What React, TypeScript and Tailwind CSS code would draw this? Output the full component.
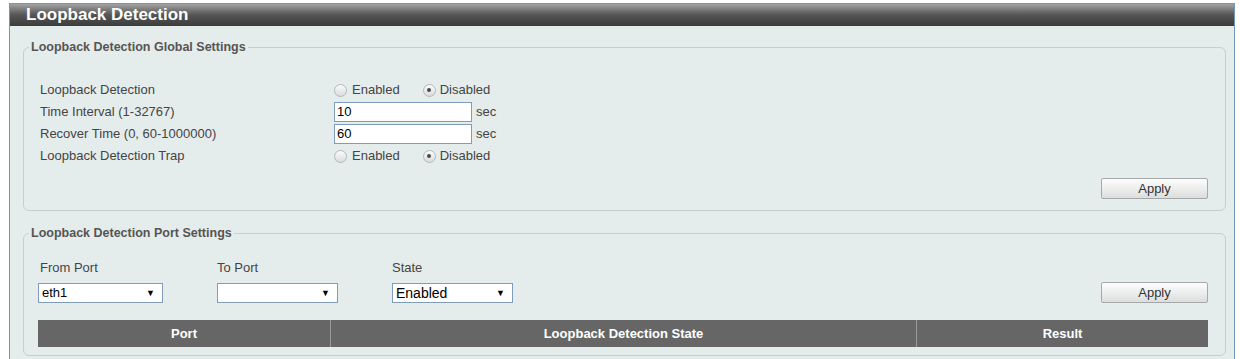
import React from "react";

function Radio({ checked }: { checked?: boolean }) {
  return (
    <span className="relative inline-block w-[13px] h-[13px] rounded-full border border-[#b4b8ba] bg-gradient-to-b from-[#fbfbfb] to-[#d9dcdd]">
      {checked && (
        <span className="absolute left-[3.5px] top-[3.5px] w-[4px] h-[4px] rounded-full bg-[#4a4a4a]" />
      )}
    </span>
  );
}

function RadioPair({ value }: { value: "enabled" | "disabled" }) {
  return (
    <div className="flex items-center">
      <Radio checked={value === "enabled"} />
      <span className="ml-[5px]">Enabled</span>
      <span className="ml-[23px] flex items-center">
        <Radio checked={value === "disabled"} />
        <span className="ml-[4px]">Disabled</span>
      </span>
    </div>
  );
}

function TextBox({ value }: { value: string }) {
  return (
    <div className="flex items-center">
      <div className="w-[138px] h-[20px] border border-[#7f9db9] bg-white pl-[2px] flex items-center text-black">
        {value}
      </div>
      <span className="ml-[4px]">sec</span>
    </div>
  );
}

function Select({ value, width, size = "text-[13px]" }: { value: string; width: string; size?: string }) {
  return (
    <div
      className={`${width} ${size} h-[20px] border border-[#7f9db9] bg-white flex items-center justify-between pl-[3px] pr-[7px] text-black`}
    >
      <span>{value}</span>
      <span className="text-[9px] leading-none">▼</span>
    </div>
  );
}

function ApplyButton() {
  return (
    <button className="w-[107px] h-[21px] border border-[#a5a9ab] rounded-[2px] bg-gradient-to-b from-[#fdfdfd] to-[#dcdede] text-[#333] text-[13px] leading-none">
      Apply
    </button>
  );
}

const GLOBAL_ROWS = [
  { label: "Loopback Detection", kind: "radio" as const, value: "disabled" },
  { label: "Time Interval (1-32767)", kind: "text" as const, value: "10" },
  { label: "Recover Time (0, 60-1000000)", kind: "text" as const, value: "60" },
  { label: "Loopback Detection Trap", kind: "radio" as const, value: "disabled" },
];

export default function App() {
  return (
    <div className="w-[1240px] h-[359px] overflow-hidden bg-white pl-[9px] pr-[5px] pt-[3px] font-['Liberation_Sans',Arial,sans-serif] text-[13px] text-[#444]">
      <div className="h-[400px] border border-[#7096b8] bg-[#e5ecec]">
        {/* Title bar */}
        <div className="h-[22px] flex items-center pl-[16px] pb-[2px] bg-gradient-to-b from-[#a3a3a3] via-[#555] to-[#3c3c3c] text-white font-bold text-[17px] leading-none">
          Loopback Detection
        </div>

        {/* Global settings */}
        <fieldset className="ml-[13px] mr-[8px] mt-[14px] border border-[#c4cfd1] rounded-[6px]">
          <legend className="ml-[5px] px-[2px] font-bold text-[12.5px] leading-[15px] text-[#555]">
            Loopback Detection Global Settings
          </legend>
          <div className="pl-[16px] pr-[17px] pb-[11px]">
            <div className="pt-[24px]">
              {GLOBAL_ROWS.map((row) => (
                <div key={row.label} className="h-[22px] flex items-center">
                  <div className="w-[294px]">{row.label}</div>
                  {row.kind === "radio" ? (
                    <RadioPair value={row.value as "disabled"} />
                  ) : (
                    <TextBox value={row.value} />
                  )}
                </div>
              ))}
            </div>
            <div className="mt-[11px] flex justify-end">
              <ApplyButton />
            </div>
          </div>
        </fieldset>

        {/* Port settings */}
        <fieldset className="ml-[13px] mr-[8px] mt-[15px] border border-[#c4cfd1] rounded-[6px]">
          <legend className="ml-[5px] px-[2px] font-bold text-[12.5px] leading-[15px] text-[#555]">
            Loopback Detection Port Settings
          </legend>
          <div className="pl-[14px] pr-[17px] pb-[8px]">
            <div className="pt-[19px] flex items-end">
              <div className="w-[179px]">
                <div className="h-[16px] leading-[16px] pl-[2px] mb-[7px]">From Port</div>
                <Select value="eth1" width="w-[125px]" />
              </div>
              <div className="w-[175px]">
                <div className="h-[16px] leading-[16px] mb-[7px]">To Port</div>
                <Select value="" width="w-[121px]" />
              </div>
              <div className="w-[175px]">
                <div className="h-[16px] leading-[16px] mb-[7px]">State</div>
                <Select value="Enabled" width="w-[121px]" size="text-[14px]" />
              </div>
              <div className="flex-1 flex justify-end">
                <ApplyButton />
              </div>
            </div>
            <div className="mt-[17px] grid grid-cols-[293px_586px_1fr] h-[27px] bg-[#666] text-white font-bold text-[13px]">
              <div className="flex items-center justify-center border-r border-[#9a9a9a]">Port</div>
              <div className="flex items-center justify-center border-r border-[#9a9a9a]">
                Loopback Detection State
              </div>
              <div className="flex items-center justify-center">Result</div>
            </div>
          </div>
        </fieldset>
      </div>
    </div>
  );
}
